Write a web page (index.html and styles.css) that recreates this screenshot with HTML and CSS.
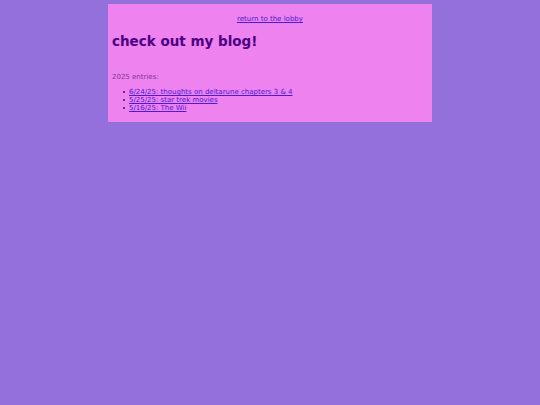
FILE: index.html
```html
<!DOCTYPE html>
<html>
<head>
<meta charset="utf-8">
<link rel="stylesheet" href="styles.css">
</head>
<body>
<div class="page">
  <p class="lobby"><a href="#">return to the lobby</a></p>
  <h1 class="title">check out my blog!</h1>
  <p class="year">2025 entries:</p>
  <ul class="entries">
    <li><a href="#">6/24/25: thoughts on deltarune chapters 3 &amp; 4</a></li>
    <li><a href="#">5/25/25: star trek movies</a></li>
    <li><a href="#">5/16/25: The Wii</a></li>
  </ul>
</div>
</body>
</html>
```
FILE: styles.css
```css
html, body {
  margin: 0;
  padding: 0;
}
body {
  background: #9370db;
  font-family: "DejaVu Sans", sans-serif;
  font-size: 7px;
  color: #7a3a96;
  padding-top: 4px;
}
.page {
  width: 324px;
  margin: 0 auto;
  background: #ee82ee;
  padding: 4px 4px 10px 4px;
  box-sizing: border-box;
  min-height: 118px;
}
a {
  color: #4b1bd6;
}
.lobby {
  text-align: center;
  margin: 7px 0 0 0;
}
.title {
  font-size: 13.5px;
  font-weight: bold;
  color: #4b0082;
  margin: 10px 0 0 0;
}
.year {
  margin: 24px 0 0 0;
}
.entries {
  margin: 7px 0 0 0;
  padding-left: 17px;
  line-height: 8px;
  list-style: none;
}
.entries li::before {
  content: "";
  display: inline-block;
  width: 2px;
  height: 2px;
  background: #6a2c8c;
  margin-left: -6px;
  margin-right: 4px;
  vertical-align: 1px;
}
```
